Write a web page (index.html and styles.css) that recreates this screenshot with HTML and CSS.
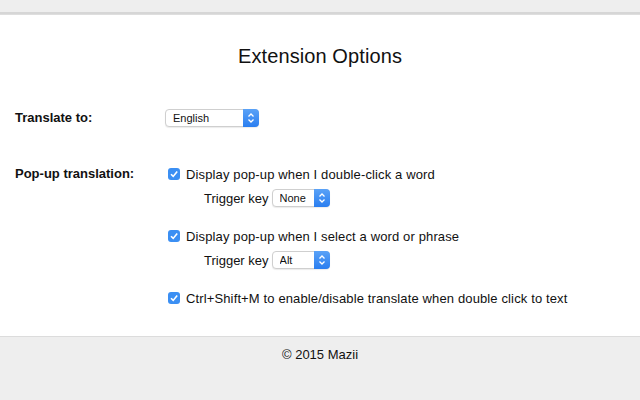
FILE: index.html
```html
<!DOCTYPE html>
<html lang="en">
<head>
    <meta charset="UTF-8">
    <title>Extension Options</title>
    <link rel="stylesheet" href="styles.css">
</head>
<body>
    <div class="topbar"></div>

    <main class="options">
        <h1>Extension Options</h1>

        <div class="option-row first">
            <div class="option-label">Translate to:</div>
            <div class="option-controls">
                <div class="select-wrap lang">
                    <select>
                        <option>English</option>
                    </select>
                    <span class="select-arrow">
                        <svg width="8" height="12" viewBox="0 0 8 12"><path d="M1.5 4.5 L4 2 L6.5 4.5 M1.5 7.5 L4 10 L6.5 7.5" fill="none" stroke="#fff" stroke-width="1.3"/></svg>
                    </span>
                </div>
            </div>
        </div>

        <div class="option-row">
            <div class="option-label">Pop-up translation:</div>
            <div class="option-controls">
                <label class="check-line">
                    <span class="checkbox"><svg width="12" height="12" viewBox="0 0 12 12"><path d="M3 6.2 L5.2 8.4 L9.2 3.4" fill="none" stroke="#fff" stroke-width="1.6"/></svg></span>
                    Display pop-up when I double-click a word
                </label>
                <div class="trigger-line">
                    <span class="trigger-text">Trigger key</span>
                    <div class="select-wrap key">
                        <select>
                            <option>None</option>
                        </select>
                        <span class="select-arrow">
                            <svg width="8" height="12" viewBox="0 0 8 12"><path d="M1.5 4.5 L4 2 L6.5 4.5 M1.5 7.5 L4 10 L6.5 7.5" fill="none" stroke="#fff" stroke-width="1.3"/></svg>
                        </span>
                    </div>
                </div>

                <label class="check-line spaced">
                    <span class="checkbox"><svg width="12" height="12" viewBox="0 0 12 12"><path d="M3 6.2 L5.2 8.4 L9.2 3.4" fill="none" stroke="#fff" stroke-width="1.6"/></svg></span>
                    Display pop-up when I select a word or phrase
                </label>
                <div class="trigger-line">
                    <span class="trigger-text">Trigger key</span>
                    <div class="select-wrap key">
                        <select>
                            <option>Alt</option>
                        </select>
                        <span class="select-arrow">
                            <svg width="8" height="12" viewBox="0 0 8 12"><path d="M1.5 4.5 L4 2 L6.5 4.5 M1.5 7.5 L4 10 L6.5 7.5" fill="none" stroke="#fff" stroke-width="1.3"/></svg>
                        </span>
                    </div>
                </div>

                <label class="check-line spaced">
                    <span class="checkbox"><svg width="12" height="12" viewBox="0 0 12 12"><path d="M3 6.2 L5.2 8.4 L9.2 3.4" fill="none" stroke="#fff" stroke-width="1.6"/></svg></span>
                    Ctrl+Shift+M to enable/disable translate when double click to text
                </label>
            </div>
        </div>
    </main>

    <footer>© 2015 Mazii</footer>
</body>
</html>
```

FILE: styles.css
```css
* {
    margin: 0;
    padding: 0;
    box-sizing: border-box;
}

body {
    font-family: 'Liberation Sans', Arial, sans-serif;
    background: #eeeeee;
    color: #111;
    font-size: 13px;
    height: 400px;
    overflow: hidden;
}

.topbar {
    height: 15px;
    background: #eeeeee;
    border-bottom: 1px solid #dedede;
    box-shadow: inset 0 -2px 0 #d6d6d6;
}

.options {
    background: #fff;
    height: 322px;
    padding: 28px 15px 0;
    border-bottom: 1px solid #dcdcdc;
}

h1 {
    text-align: center;
    font-weight: normal;
    font-size: 20px;
    line-height: 26px;
    letter-spacing: 0.1px;
    color: #111;
    margin-bottom: 40px;
}

.option-row {
    display: flex;
}

.option-row.first {
    margin-bottom: 38px;
}

.option-label {
    width: 150px;
    font-weight: bold;
    line-height: 18px;
    flex-shrink: 0;
}

.option-controls {
    display: flex;
    flex-direction: column;
}

.check-line {
    display: flex;
    align-items: center;
    height: 18px;
    padding-left: 3px;
    letter-spacing: 0.13px;
}

.check-line.spaced {
    margin-top: 20px;
}

.checkbox {
    width: 12px;
    height: 12px;
    border-radius: 3px;
    background: #3b8ff3;
    margin-right: 6px;
    display: flex;
}

.trigger-line {
    display: flex;
    align-items: center;
    height: 18px;
    margin-top: 6px;
    padding-left: 39px;
}

.trigger-text {
    margin-right: 3px;
}

.select-wrap {
    position: relative;
    height: 18px;
}

.select-wrap select {
    -webkit-appearance: none;
    appearance: none;
    height: 18px;
    border: 1px solid #cfcfcf;
    border-radius: 4px;
    background: #fff;
    font-family: 'Liberation Sans', Arial, sans-serif;
    font-size: 11px;
    color: #111;
    padding: 0 0 0 7px;
    box-shadow: 0 1px 1px rgba(0, 0, 0, 0.08);
}

.select-wrap.lang select {
    width: 94px;
}

.select-wrap.key select {
    width: 58px;
}

.select-arrow {
    position: absolute;
    top: 0;
    right: 0;
    width: 16px;
    height: 18px;
    border-radius: 0 4px 4px 0;
    background: linear-gradient(#5aa2f7, #2a7ef0);
    display: flex;
    align-items: center;
    justify-content: center;
    pointer-events: none;
}

footer {
    text-align: center;
    padding-top: 10px;
    line-height: 16px;
    color: #111;
}
```
